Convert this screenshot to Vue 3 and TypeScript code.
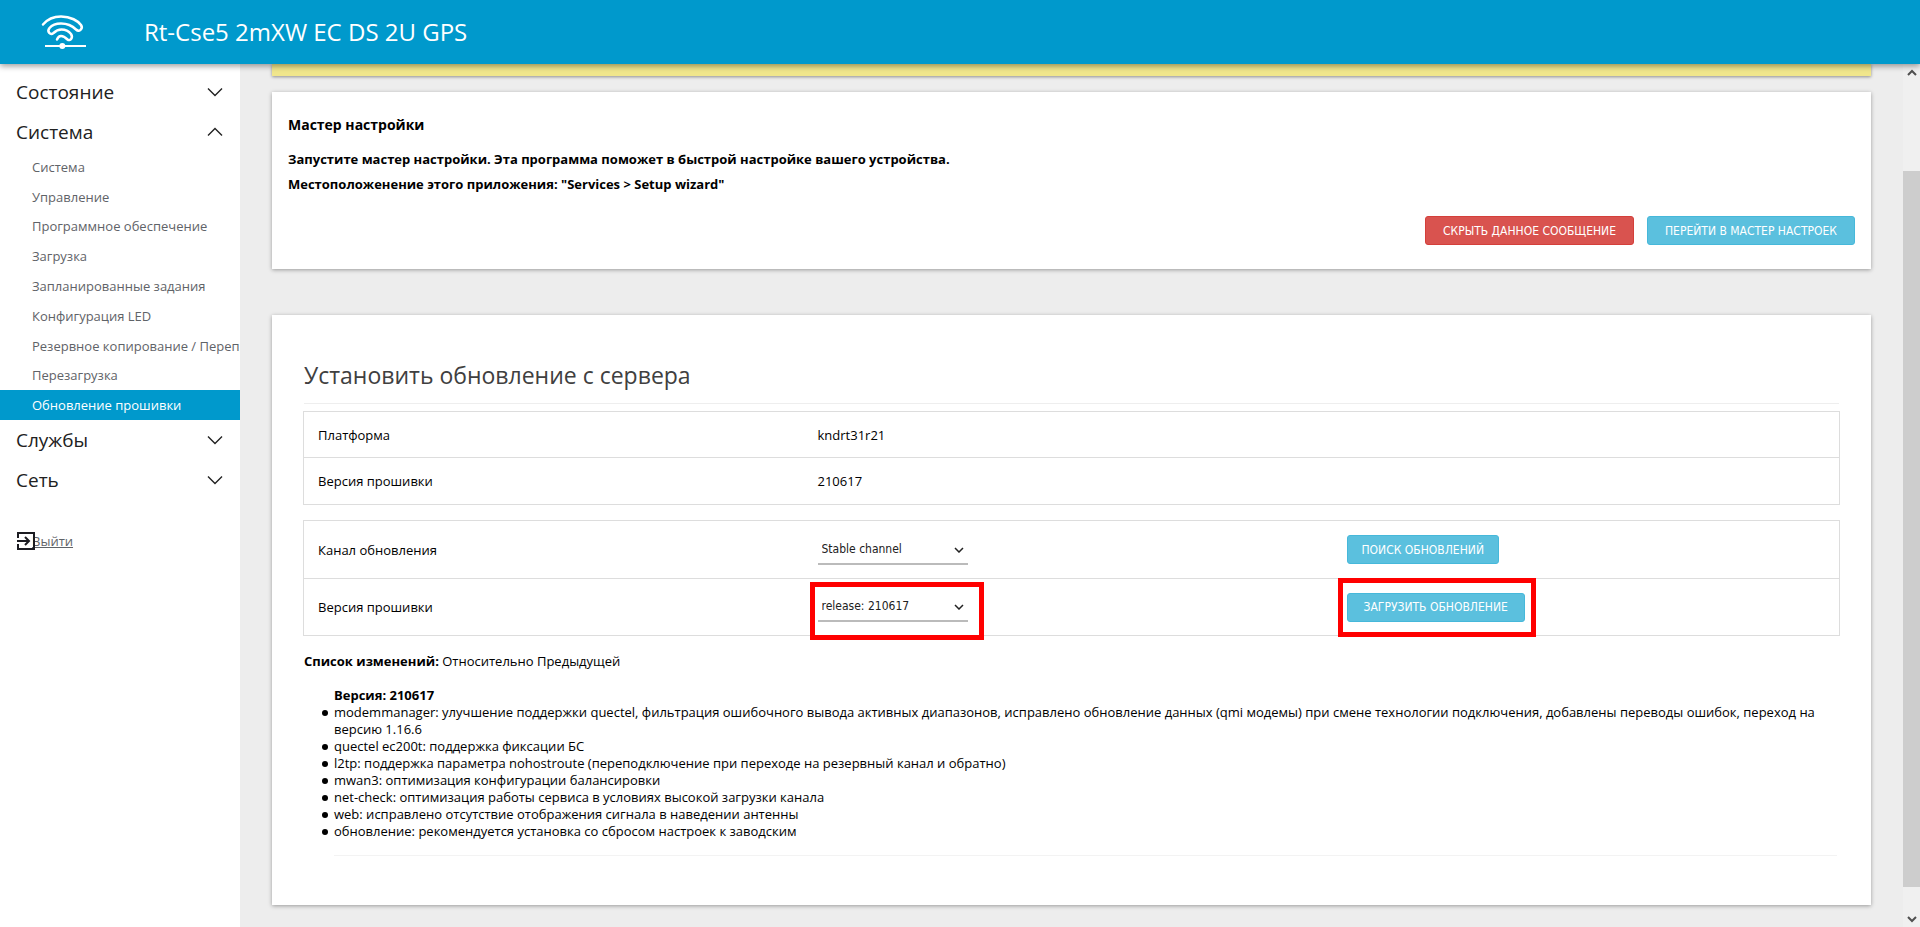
<script setup lang="ts">
import { ref } from 'vue'

interface MenuSection {
  title: string
  open: boolean
  items: string[]
}

const sections = ref<MenuSection[]>([
  { title: 'Состояние', open: false, items: [] },
  {
    title: 'Система',
    open: true,
    items: [
      'Система',
      'Управление',
      'Программное обеспечение',
      'Загрузка',
      'Запланированные задания',
      'Конфигурация LED',
      'Резервное копирование / Перепрошивка',
      'Перезагрузка',
      'Обновление прошивки',
    ],
  },
  { title: 'Службы', open: false, items: [] },
  { title: 'Сеть', open: false, items: [] },
])

const activeItem = 'Обновление прошивки'
const channel = ref('Stable channel')
const release = ref('release: 210617')

const changes: string[] = [
  'modemmanager: улучшение поддержки quectel, фильтрация ошибочного вывода активных диапазонов, исправлено обновление данных (qmi модемы) при смене технологии подключения, добавлены переводы ошибок, переход на версию 1.16.6',
  'quectel ec200t: поддержка фиксации БС',
  'l2tp: поддержка параметра nohostroute (переподключение при переходе на резервный канал и обратно)',
  'mwan3: оптимизация конфигурации балансировки',
  'net-check: оптимизация работы сервиса в условиях высокой загрузки канала',
  'web: исправлено отсутствие отображения сигнала в наведении антенны',
  'обновление: рекомендуется установка со сбросом настроек к заводским',
]
</script>

<template>
  <div class="page">
    <header class="header">
      <svg class="logo" width="48" height="40" viewBox="0 0 48 40" fill="none" stroke="#fff">
        <path
          d="M3 12.5C8 6.5 14 4.5 21 4.5C31 4.5 38 9 41 13C43.5 17 39 20.5 36 17.5C32 13.5 26 11.5 21 11.5C16 11.5 12 13 9.5 16C6.5 20 10.5 23.5 13.5 21C16 18.5 18 17.5 21.5 17.5C26 17.5 29 19.5 31 22C33.5 26 30 29.5 27.5 27.5C25 25 23 24 21 24C19 24 18 25 17 27.5"
          stroke-width="2.5"
          stroke-linecap="round"
          stroke-linejoin="round"
        />
        <path d="M5 34H46" stroke-width="2" />
        <circle cx="22.3" cy="34" r="3" fill="#fff" stroke="none" />
      </svg>
      <h1 class="device">Rt-Cse5 2mXW EC DS 2U GPS</h1>
    </header>

    <div class="body">
      <nav class="sidebar">
        <div v-for="section in sections" :key="section.title">
          <button class="section" type="button" :aria-expanded="section.open" @click="section.open = !section.open">
            <span>{{ section.title }}</span>
            <svg width="16" height="10" viewBox="0 0 16 10" fill="none" stroke="#222" stroke-width="1.4">
              <path :d="section.open ? 'M1 8.5L8 1.5L15 8.5' : 'M1 1.5L8 8.5L15 1.5'" />
            </svg>
          </button>
          <ul v-if="section.open && section.items.length" class="submenu">
            <li v-for="item in section.items" :key="item">
              <a href="#" :class="{ active: item === activeItem }">{{ item }}</a>
            </li>
          </ul>
        </div>
        <a class="logout" href="#">
          <svg width="18" height="18" viewBox="0 0 18 18" fill="none" stroke="#1c1c22" stroke-width="2">
            <path d="M1 6V1H17V17H1V12M0 9H12M8 5L12 9L8 13" />
          </svg>
          <span>Выйти</span>
        </a>
      </nav>

      <main class="content">
        <div class="notice"></div>

        <section class="card wizard">
          <h2>Мастер настройки</h2>
          <p>Запустите мастер настройки. Эта программа поможет в быстрой настройке вашего устройства.</p>
          <p>Местоположенение этого приложения: "Services &gt; Setup wizard"</p>
          <div class="actions">
            <button class="btn danger" type="button">Скрыть данное сообщение</button>
            <button class="btn" type="button">Перейти в мастер настроек</button>
          </div>
        </section>

        <section class="card update">
          <h2>Установить обновление с сервера</h2>
          <hr />
          <table class="info">
            <tbody>
              <tr>
                <th scope="row">Платформа</th>
                <td colspan="2">kndrt31r21</td>
              </tr>
              <tr>
                <th scope="row">Версия прошивки</th>
                <td colspan="2">210617</td>
              </tr>
            </tbody>
          </table>
          <table class="controls">
            <tbody>
              <tr>
                <th scope="row"><label for="channel">Канал обновления</label></th>
                <td>
                  <span class="field">
                    <select id="channel" v-model="channel">
                      <option>Stable channel</option>
                    </select>
                    <svg width="10" height="6" viewBox="0 0 10 6" fill="none" stroke="#222" stroke-width="1.5"><path d="M1 1L5 5L9 1" /></svg>
                  </span>
                </td>
                <td><button class="btn" type="button">Поиск обновлений</button></td>
              </tr>
              <tr>
                <th scope="row"><label for="release">Версия прошивки</label></th>
                <td>
                  <span class="field marked">
                    <select id="release" v-model="release">
                      <option>release: 210617</option>
                    </select>
                    <svg width="10" height="6" viewBox="0 0 10 6" fill="none" stroke="#222" stroke-width="1.5"><path d="M1 1L5 5L9 1" /></svg>
                  </span>
                </td>
                <td><span class="marked load"><button class="btn" type="button">Загрузить обновление</button></span></td>
              </tr>
            </tbody>
          </table>
          <p class="changes-title"><strong>Список изменений:</strong> Относительно Предыдущей</p>
          <div class="changes">
            <strong>Версия: 210617</strong>
            <ul>
              <li v-for="change in changes" :key="change">{{ change }}</li>
            </ul>
            <hr />
          </div>
        </section>
      </main>

      <div class="scrollbar">
        <svg width="10" height="7" viewBox="0 0 10 7" fill="none" stroke="#505050" stroke-width="2"><path d="M1 6L5 2L9 6" /></svg>
        <div class="thumb"></div>
        <svg width="10" height="7" viewBox="0 0 10 7" fill="none" stroke="#505050" stroke-width="2"><path d="M1 1L5 5L9 1" /></svg>
      </div>
    </div>
  </div>
</template>

<style>
body {
  margin: 0;
}
</style>

<style scoped>
* {
  box-sizing: border-box;
}

.page {
  display: flex;
  flex-direction: column;
  height: 100vh;
  overflow: hidden;
  background: #ededed;
  color: #000;
  font-family: "Open Sans", "Noto Sans", sans-serif;
  font-size: 13px;
  line-height: 17px;
}

.header {
  position: relative;
  z-index: 1;
  display: flex;
  align-items: center;
  flex: none;
  height: 64px;
  padding-left: 40px;
  background: #0099cc;
  color: #fff;
  box-shadow: 0 2px 6px rgba(0, 0, 0, 0.4);
}

.device {
  margin: 0 0 0 56px;
  font-size: 24px;
  font-weight: 400;
  line-height: 32px;
}

.body {
  display: flex;
  flex: 1;
  min-height: 0;
}

.sidebar {
  flex: none;
  width: 240px;
  padding-top: 8px;
  background: #fff;
  overflow: hidden;
}

.section {
  display: flex;
  align-items: center;
  justify-content: space-between;
  width: 100%;
  height: 40px;
  padding: 0 17px 0 16px;
  border: 0;
  background: none;
  color: #212121;
  font: inherit;
  font-size: 19px;
}

.submenu {
  display: grid;
  grid-auto-rows: 1fr;
  height: 268px;
  margin: 0;
  padding: 0;
  list-style: none;
}

.submenu a {
  display: flex;
  align-items: center;
  height: 100%;
  padding: 1px 0 0 32px;
  color: #5f6368;
  text-decoration: none;
  white-space: nowrap;
}

.submenu a.active {
  background: #0099cc;
  color: #fff;
}

.logout {
  display: flex;
  align-items: center;
  margin: 32px 0 0 17px;
  color: #5f6368;
}

.logout span {
  margin-left: -3px;
}

.logout svg {
  z-index: 1;
}

.content {
  flex: 1;
  min-width: 0;
  padding: 0 32px;
}

.scrollbar {
  display: flex;
  flex: none;
  flex-direction: column;
  align-items: center;
  width: 17px;
  padding: 5px 0 4px;
  background: #f0f0f0;
}

.thumb {
  flex: 1;
  width: 100%;
  margin: 95px 0 29px;
  background: #cdcdcd;
}

.notice {
  height: 12px;
  background: #f0e68c;
  box-shadow: 0 1px 3px rgba(0, 0, 0, 0.4);
}

.card {
  background: #fff;
  box-shadow: 0 1px 4px rgba(0, 0, 0, 0.35);
}

.wizard {
  margin-top: 16px;
  padding: 20px 16px 24px;
  font-weight: 700;
}

.wizard h2 {
  margin: 0 0 10px;
  font-size: 14px;
  line-height: 25px;
}

.wizard p {
  margin: 0;
  line-height: 25px;
}

.actions {
  display: flex;
  justify-content: flex-end;
  gap: 13px;
  margin-top: 19px;
}

.btn {
  height: 29px;
  padding: 0 14px;
  border: 1px solid #46b8da;
  border-radius: 3px;
  background: #5bc0de;
  color: #fff;
  font-family: "DejaVu Sans Condensed", "DejaVu Sans", sans-serif;
  font-size: 12px;
  text-transform: uppercase;
}

.actions .btn {
  padding: 0 17px;
}

.load .btn {
  padding: 0 16px;
}

.btn.danger {
  border-color: #d43f3a;
  background: #d9534f;
}

.update {
  margin-top: 46px;
  padding: 44px 31px 49px;
}

.update h2 {
  margin: 0 1px;
  color: #404040;
  font-size: 23px;
  font-weight: 400;
  line-height: 32px;
}

hr {
  margin: 12px 1px 7px;
  border: 0;
  border-top: 1px solid #eee;
}

table {
  width: 100%;
  border: 1px solid #ddd;
  border-collapse: collapse;
  table-layout: fixed;
}

tr + tr {
  border-top: 1px solid #ddd;
}

th,
td {
  padding: 0;
}

th {
  width: 514px;
  padding-left: 14px;
  font-weight: 400;
  text-align: left;
}

td:last-child {
  width: 493px;
}

.info td:last-child {
  width: auto;
}

.info th,
.info td,
.controls th {
  padding-top: 1px;
}

.info tr {
  height: 46px;
}

.info tr + tr {
  height: 47px;
}

.controls {
  margin-top: 15px;
}

.controls tr {
  height: 58px;
}

.controls tr + tr {
  height: 57px;
}

.field {
  position: relative;
  display: inline-flex;
  align-items: center;
  width: 150px;
}

.field select {
  width: 100%;
  height: 30px;
  padding: 0 4px;
  border: 0;
  border-bottom: 2px solid #bbb;
  appearance: none;
  background: transparent;
  color: #212121;
  font-family: "DejaVu Sans Condensed", "DejaVu Sans", sans-serif;
  font-size: 12px;
}

.field svg {
  position: absolute;
  right: 4px;
}

.load {
  position: relative;
  display: inline-block;
}

.marked::after {
  content: "";
  position: absolute;
  inset: -10px -16px -18px -8px;
  border: 5px solid #f00;
  pointer-events: none;
}

.load::after {
  inset: -15px -11px -15px -9px;
}

.changes-title {
  margin: 17px 1px;
}

.changes {
  margin: 0 3px 0 31px;
}

.changes ul {
  margin: 0;
  padding: 0;
  list-style: none;
}

.changes li {
  position: relative;
}

.changes li::before {
  content: "";
  position: absolute;
  top: 6px;
  left: -12px;
  width: 6px;
  height: 6px;
  border-radius: 50%;
  background: #000;
}

.changes hr {
  margin: 15px 0 0;
  border-color: #f3f3f3;
}
</style>
